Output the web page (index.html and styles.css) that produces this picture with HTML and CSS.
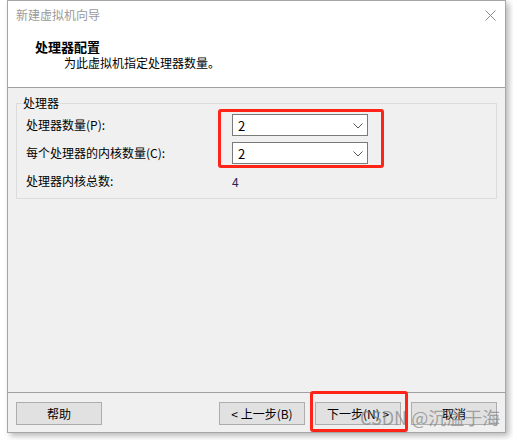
FILE: index.html
```html
<!DOCTYPE html>
<html lang="zh-CN">
<head>
<meta charset="utf-8">
<title>新建虚拟机向导</title>
<link rel="stylesheet" href="styles.css">
</head>
<body>
<div class="window">
  <div class="header">
    <div class="titlebar">
      <span class="title">新建虚拟机向导</span>
      <svg class="close" width="11" height="11" viewBox="0 0 11 11"><path d="M0.5 0.5 L10.5 10.5 M10.5 0.5 L0.5 10.5" stroke="#8a8a8a" stroke-width="1" fill="none"/></svg>
    </div>
    <div class="heading">处理器配置</div>
    <div class="subtitle">为此虚拟机指定处理器数量。</div>
  </div>
  <div class="content">
    <fieldset class="group">
      <legend class="legend">处理器</legend>
      <div class="grid">
        <div class="label">处理器数量(P):</div>
        <div class="combo"><span class="value">2</span><svg width="10" height="6" viewBox="0 0 10 6"><path d="M0.5 0.5 L5 5 L9.5 0.5" stroke="#555" stroke-width="1" fill="none"/></svg></div>
        <div class="label">每个处理器的内核数量(C):</div>
        <div class="combo"><span class="value">2</span><svg width="10" height="6" viewBox="0 0 10 6"><path d="M0.5 0.5 L5 5 L9.5 0.5" stroke="#555" stroke-width="1" fill="none"/></svg></div>
        <div class="label">处理器内核总数:</div>
        <div class="total">4</div>
      </div>
    </fieldset>
  </div>
  <div class="footer">
    <button class="btn">帮助</button>
    <div class="spacer"></div>
    <button class="btn">&lt; 上一步(B)</button>
    <button class="btn next">下一步(N) &gt;</button>
    <button class="btn cancel">取消</button>
  </div>
</div>
<div class="mark mark-combo"></div>
<div class="mark mark-next"></div>
<div class="watermark">CSDN @沉溢于海</div>
</body>
</html>
```

FILE: styles.css
```css
html, body {
  margin: 0;
  padding: 0;
  background: #ffffff;
}
body {
  width: 513px;
  height: 440px;
  overflow: hidden;
  position: relative;
  font-family: "Noto Sans CJK SC", "Microsoft YaHei", sans-serif;
  font-size: 12px;
  color: #000;
}
.window {
  margin-left: 7px;
  width: 497px;
  height: 431px;
  border: 1px solid #a6a6a6;
  box-shadow: 3px 3px 6px rgba(0, 0, 0, 0.28);
  display: flex;
  flex-direction: column;
  background: #f0f0f0;
}
.header {
  background: #ffffff;
  height: 70px;
  padding: 6px 0 10px 0;
  border-bottom: 1px solid #a0a0a0;
}
.titlebar {
  display: flex;
  justify-content: space-between;
  align-items: center;
  height: 16px;
  line-height: 16px;
  padding-left: 8px;
  padding-right: 9px;
}
.title {
  color: #9a9a9a;
}
.heading {
  margin-top: 16px;
  padding-left: 27px;
  font-size: 13px;
  font-weight: bold;
  line-height: 16px;
}
.subtitle {
  padding-left: 56px;
  line-height: 16px;
}
.content {
  flex: 1;
  padding: 7px 8px 0 8px;
}
.group {
  margin: 0;
  padding: 3px 9px 6px 9px;
  border: 1px solid #dcdcdc;
  min-width: 0;
}
.legend {
  padding: 0 1px;
  margin-left: -4px;
  line-height: 16px;
  font-size: 12px;
}
.grid {
  display: grid;
  grid-template-columns: 206px 136px;
  grid-auto-rows: 22px;
  row-gap: 6px;
  align-items: center;
}
.label {
  line-height: 16px;
}
.combo {
  box-sizing: border-box;
  height: 22px;
  background: #ffffff;
  border: 1px solid #7a7a7a;
  display: flex;
  align-items: center;
  justify-content: space-between;
  padding: 0 4px 0 5px;
  font-size: 13px;
}
.combo svg {
  margin-top: 1px;
}
.total {
  padding-left: 0;
  color: #2e2050;
  font-size: 12px;
}
.footer {
  border-top: 1px solid #a0a0a0;
  height: 23px;
  padding: 9px 8px 7px 8px;
  display: flex;
}
.spacer {
  flex: 1;
}
.btn {
  box-sizing: border-box;
  width: 86px;
  height: 23px;
  border: 1px solid #adadad;
  background: #e1e1e1;
  font-family: "Noto Sans CJK SC", "Microsoft YaHei", sans-serif;
  font-size: 12px;
  color: #000;
  padding: 0;
  line-height: 20px;
}
.next {
  margin-left: 10px;
}
.cancel {
  margin-left: 10px;
}
.mark {
  position: absolute;
  border: 3px solid #ff2418;
  border-radius: 3px;
  box-sizing: border-box;
}
.mark-combo {
  left: 218px;
  top: 109px;
  width: 166px;
  height: 59px;
}
.mark-next {
  left: 310px;
  top: 391px;
  width: 98px;
  height: 41px;
}
.watermark {
  position: absolute;
  left: 360px;
  top: 405px;
  font-size: 18px;
  line-height: 24px;
  color: rgba(130, 130, 130, 0.7);
  white-space: nowrap;
}
```
